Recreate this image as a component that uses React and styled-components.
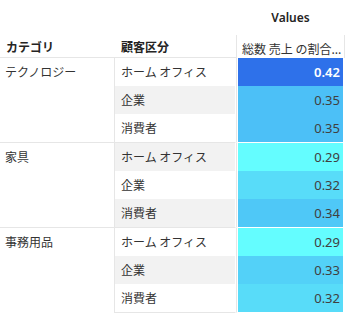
import React from 'react'
import styled, { createGlobalStyle } from 'styled-components'

const GlobalStyle = createGlobalStyle`
    *, *::before, *::after {
        box-sizing: border-box;
    }

    body {
        margin: 0;
        background: #ffffff;
        font-family: 'Noto Sans', 'Noto Sans CJK JP', sans-serif;
        color: #333333;
    }
`

const Table = styled.table`
    border-collapse: separate;
    border-spacing: 0;
    table-layout: fixed;
    width: 345px;
    font-size: 12px;
`

const TitleCell = styled.th`
    height: 35px;
    padding: 9px 0 0;
    vertical-align: top;
    text-align: center;
    font-family: 'Noto Sans', sans-serif;
    font-size: 12px;
    font-weight: 600;
    color: #252423;
`

const HeadCell = styled.th`
    height: 23px;
    padding: 1px 6px 0;
    text-align: left;
    vertical-align: middle;
    font-weight: 700;
    font-family: 'Noto Sans CJK JP', sans-serif;
    color: #252423;
    border-bottom: 1px solid #e6e6e6;
`

const MeasureHead = styled.th`
    height: 23px;
    padding: 3px 2px 0 5px;
    text-align: left;
    font-weight: 400;
    font-family: 'Noto Sans CJK JP', sans-serif;
    color: #333333;
    border-left: 1px solid #e6e6e6;
    border-right: 1px solid #e6e6e6;
    white-space: nowrap;
    overflow: hidden;
`

const CategoryCell = styled.td`
    padding: 0 5px;
    vertical-align: top;
    line-height: 28px;
    font-family: 'Noto Sans CJK JP', sans-serif;
    border-right: 1px solid #e6e6e6;
    border-top: ${(p) => (p.$first ? 'none' : '1px solid #e6e6e6')};
`

const SegmentCell = styled.td`
    height: ${(p) => (p.$groupStart && !p.$first ? 29 : 28)}px;
    padding: 0 6px;
    line-height: 28px;
    font-family: 'Noto Sans CJK JP', sans-serif;
    background: ${(p) => (p.$shaded ? '#f2f2f2' : '#ffffff')};
    background-clip: padding-box;
    border-top: ${(p) => (p.$groupStart && !p.$first ? '1px solid #e6e6e6' : 'none')};
    border-right: 1px solid #ffffff;
    border-bottom: ${(p) => (p.$last ? '1px solid #e6e6e6' : 'none')};
`

const ValueCell = styled.td`
    padding: 0 2px 0 1px;
    border-left: 1px solid #e6e6e6;
    border-top: ${(p) => (p.$groupStart && !p.$first ? '1px solid #ffffff' : 'none')};
    border-bottom: ${(p) => (p.$last ? '1px solid #ffffff' : 'none')};
`

const Swatch = styled.div`
    height: 28px;
    padding-right: 3px;
    line-height: 28px;
    text-align: right;
    font-family: 'Noto Sans', sans-serif;
    font-size: 13px;
    font-weight: ${(p) => (p.$strong ? 600 : 400)};
    color: ${(p) => (p.$strong ? '#ffffff' : '#404040')};
    background: ${(p) => p.$color};
`

const colorFor = (v) => {
  if (v >= 0.42) return '#2e71ea'
  if (v >= 0.35) return '#4cc0f7'
  if (v >= 0.34) return '#4fc8f7'
  if (v >= 0.33) return '#53d1f8'
  if (v >= 0.32) return '#58dcf9'
  return '#64fdff'
}

const groups = [
  { name: 'テクノロジー', rows: [['ホーム オフィス', 0.42], ['企業', 0.35], ['消費者', 0.35]] },
  { name: '家具', rows: [['ホーム オフィス', 0.29], ['企業', 0.32], ['消費者', 0.34]] },
  { name: '事務用品', rows: [['ホーム オフィス', 0.29], ['企業', 0.33], ['消費者', 0.32]] },
]

export default function App() {
  let index = 0
  return (
    <>
      <GlobalStyle />
      <Table>
        <colgroup>
          <col style={{ width: 115 }} />
          <col style={{ width: 121 }} />
          <col style={{ width: 109 }} />
        </colgroup>
        <thead>
          <tr>
            <TitleCell />
            <TitleCell />
            <TitleCell>Values</TitleCell>
          </tr>
          <tr>
            <HeadCell>カテゴリ</HeadCell>
            <HeadCell>顧客区分</HeadCell>
            <MeasureHead>総数 売上 の割合...</MeasureHead>
          </tr>
        </thead>
        <tbody>
          {groups.map((group, g) =>
            group.rows.map(([segment, value], r) => {
              const i = index++
              const first = g === 0
              const groupStart = r === 0
              const last = g === groups.length - 1 && r === group.rows.length - 1
              return (
                <tr key={`${group.name}-${segment}`}>
                  {groupStart && (
                    <CategoryCell rowSpan={group.rows.length} $first={first}>
                      {group.name}
                    </CategoryCell>
                  )}
                  <SegmentCell $shaded={i % 2 === 1} $groupStart={groupStart} $first={first} $last={last}>
                    {segment}
                  </SegmentCell>
                  <ValueCell $groupStart={groupStart} $first={first} $last={last}>
                    <Swatch $color={colorFor(value)} $strong={value >= 0.42}>
                      {value.toFixed(2)}
                    </Swatch>
                  </ValueCell>
                </tr>
              )
            })
          )}
        </tbody>
      </Table>
    </>
  )
}
